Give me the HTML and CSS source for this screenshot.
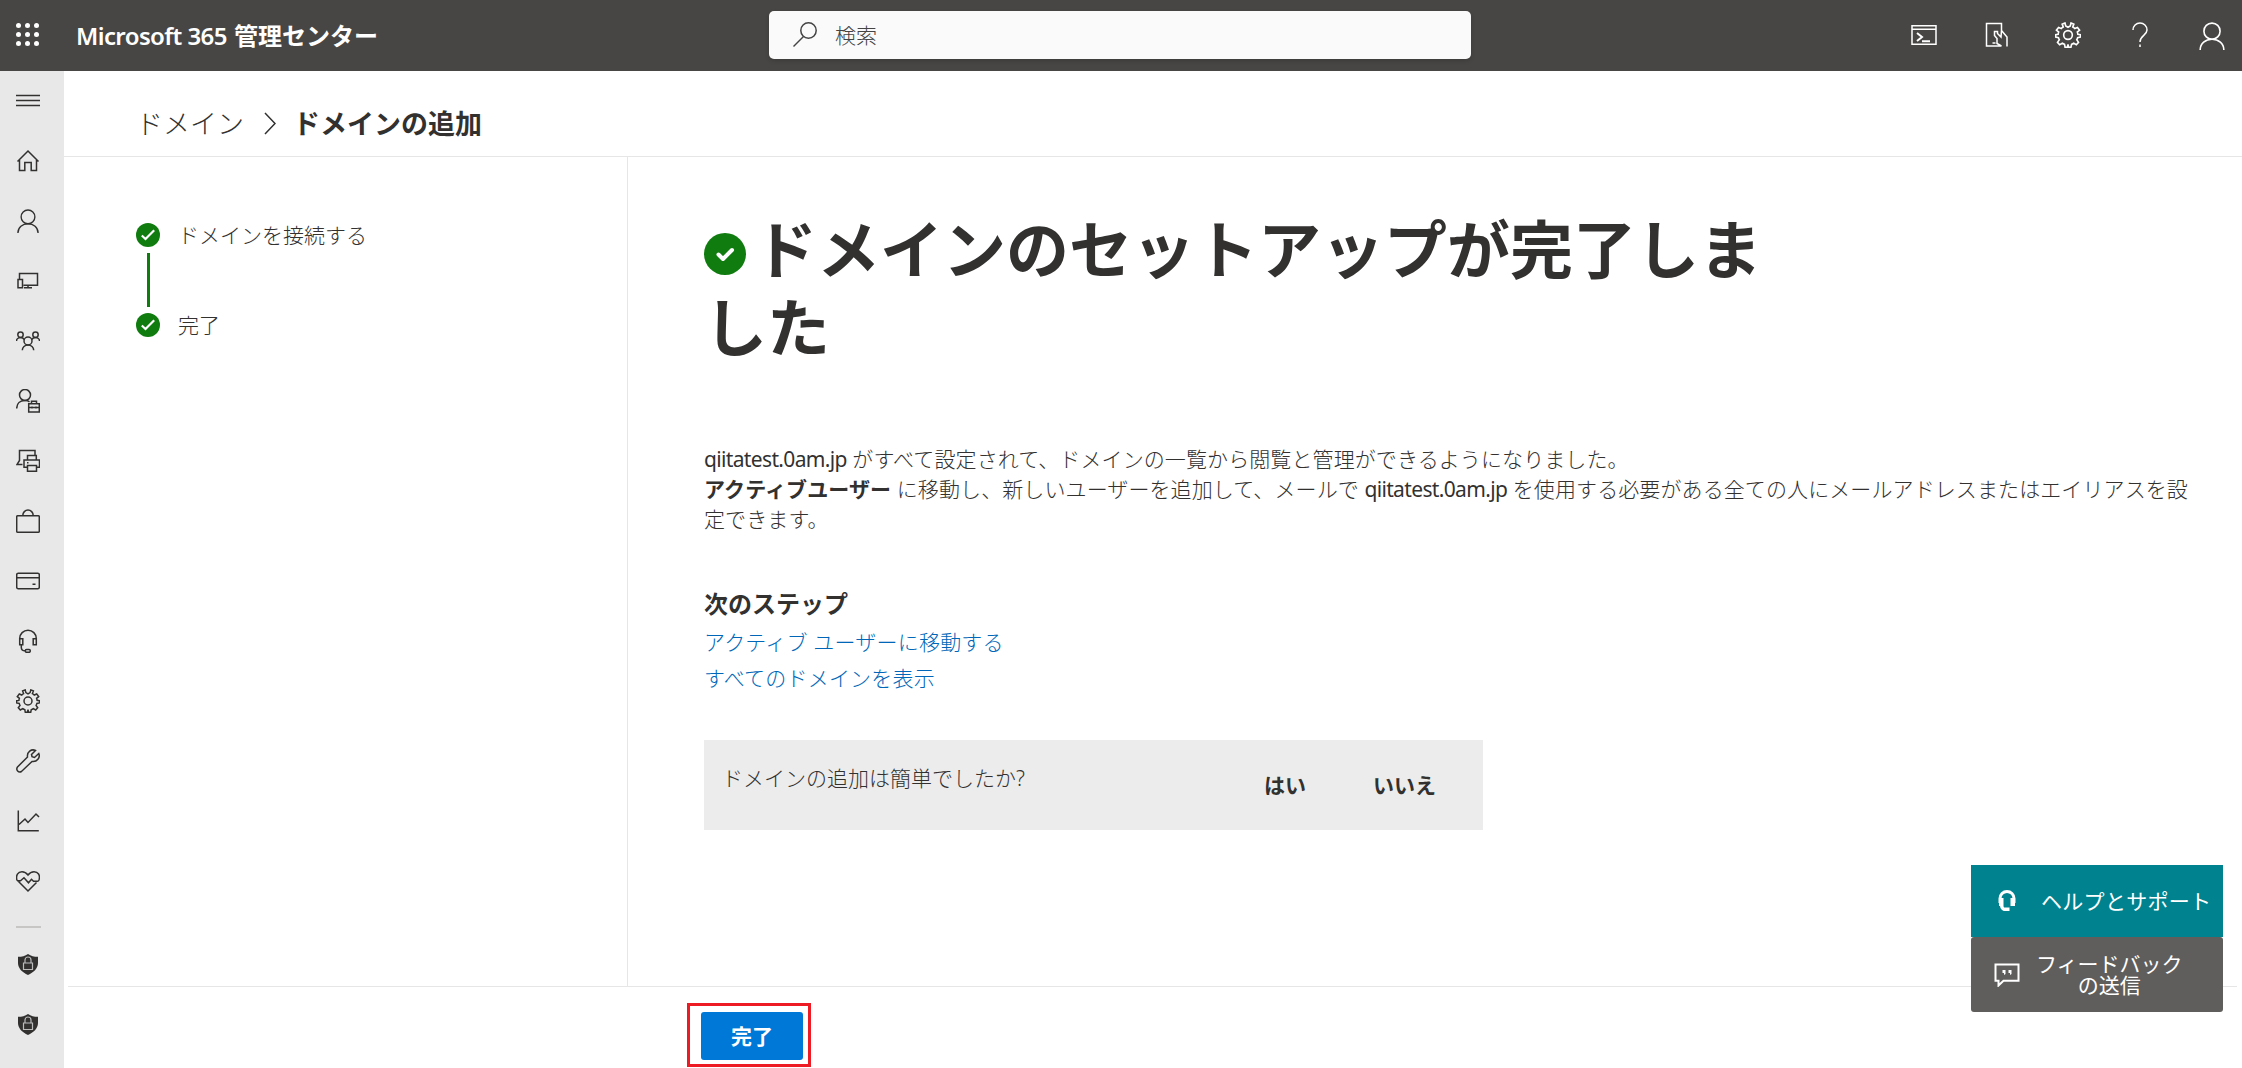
FILE: index.html
```html
<!DOCTYPE html>
<html lang="ja">
<head>
    <meta charset="UTF-8">
    <meta name="viewport" content="width=device-width, initial-scale=1.0">
    <title>Microsoft 365 管理センター</title>
    <link rel="stylesheet" href="styles.css">
</head>
<body>
    <!-- Shared icon shapes -->
    <svg class="defs" width="0" height="0">
        <symbol id="gear" viewBox="0 0 24 24">
            <path d="M9.9 3.6 9.2.9 6.6 2l1 2.600a8 8 0 0 0-1.800 1.400L3.300 5 1.300 7.600l2.100 1.700a8 8 0 0 0-.5 2.100L.6 11.700v2.200l2.600.5a8 8 0 0 0 .8 2L2.300 18.800l2 2.200 2.500-1.400a8 8 0 0 0 2 1l.5 2.700h2.100l.6-2.600 .6 2.600h2.100l.6-2.700a8 8 0 0 0 2-1l2.400 1.400 2-2.200-1.600-2.400a8 8 0 0 0 .8-2l2.600-.5v-2.200l-2.400-.4a8 8 0 0 0-.5-2l2.100-1.700L20.700 5l-2.500 1a8 8 0 0 0-1.800-1.400l1-2.600L14.800.9l-.7 2.700-2.100 1.300z"/>
            <circle cx="12" cy="12" r="4"/>
        </symbol>
        <symbol id="person" viewBox="0 0 24 26">
            <circle cx="12" cy="8.500" r="7.500"/>
            <path d="M1 26c0-6 5-10 11-10s11 4 11 10"/>
        </symbol>
        <symbol id="headset" viewBox="0 0 24 24">
            <path d="M3.700 15V9.500a8.300 8.300 0 0 1 16.600 0V15M6.800 9.700H3.700v6.100h3.100zM17.200 9.700h3.100v6.100h-3.100zM5.300 16v2.500c0 2 1.500 3.300 3.800 3.300"/>
            <rect x="9.300" y="20.500" width="5" height="2.800" rx="1.200"/>
        </symbol>
        <symbol id="shield" viewBox="0 0 24 24">
            <path class="fill-dark" d="M12 2c3 2 6 2.800 10 2.800V11c0 5.500-4.500 9.500-10 12C6.500 20.500 2 16.500 2 11V4.800C6 4.800 9 4 12 2z"/>
            <path class="lock" d="M7.500 11h9v6.500h-9zM9 11V8a3 3 0 0 1 6 0v3"/>
        </symbol>
        <symbol id="check" viewBox="0 0 24 24">
            <circle class="fill-green" cx="12" cy="12" r="12"/>
            <path class="tick" d="m5.800 12.500 3.700 3.500 8.700-8.700"/>
        </symbol>
    </svg>

    <header class="topbar">
        <button class="waffle" aria-label="アプリ起動ツール">
            <i></i><i></i><i></i><i></i><i></i><i></i><i></i><i></i><i></i>
        </button>
        <div class="brand"><span class="brand-latin">Microsoft 365 </span>管理センター</div>
        <div class="search">
            <svg class="icon" width="24" height="26" viewBox="0 0 24 26"><circle cx="15.500" cy="8.500" r="7.700"/><path d="M10.500 14.500 0.500 24.500"/></svg>
            <span>検索</span>
        </div>
        <div class="top-icons">
            <svg class="icon" width="26" height="24" viewBox="0 0 26 24"><path d="M1 2.700h24v18.600H1zM1 6.200h24"/><path class="bold" d="m6 10 5 4-5 4M11 18.300h8"/></svg>
            <svg class="icon" width="26" height="26" viewBox="0 0 26 26"><path d="M8 24H3.500V1.500h15V9M18.500 24H8M9.500 21h3M18.500 8.500 18 15l-3.500-3.500V9.500h-3v4l2.500 3v5L18.500 24M18.500 8.500l5.500 6.500v9.500"/></svg>
            <svg class="icon" width="26" height="26"><use href="#gear"/></svg>
            <svg class="icon" width="26" height="26" viewBox="0 0 26 26"><path d="M6 8a7 7 0 0 1 14 0c0 5.500-7 5.500-7 12M13 22.500V25"/></svg>
            <svg class="icon person" width="26" height="28"><use href="#person"/></svg>
        </div>
    </header>

    <div class="layout">
        <nav class="sidebar">
            <div class="nav-item"><svg class="icon" width="24" height="24" viewBox="0 0 24 24"><path d="M0 6.500h24M0 11.500h24M0 16.500h24"/></svg></div>
            <div class="nav-item"><svg class="icon" width="24" height="24" viewBox="0 0 24 24"><path d="M1.500 12.500 12 2l10.500 10.500M3.500 10.800V21.500h5.300v-8h6.400v8h5.300V10.800"/></svg></div>
            <div class="nav-item"><svg class="icon" width="22" height="24"><use href="#person"/></svg></div>
            <div class="nav-item"><svg class="icon" width="24" height="24" viewBox="0 0 24 24"><path d="M3.500 10V4.500h18v11.700h-14M2 10.500h4.500v8.300H2zM8 18.800h8M12 16v3"/></svg></div>
            <div class="nav-item"><svg class="icon" width="24" height="24" viewBox="0 0 24 24"><circle cx="4.500" cy="5.800" r="2.700"/><circle cx="19.500" cy="5.800" r="2.700"/><circle cx="12" cy="12" r="4"/><path d="M.5 12c0-2 2-3.500 4-3.500s3 .8 3.700 2M23.500 12c0-2-2-3.500-4-3.500s-3 .8-3.700 2M6.300 21.300c0-3 2.500-5.300 5.700-5.300s5.700 2.300 5.700 5.300"/></svg></div>
            <div class="nav-item"><svg class="icon" width="24" height="24" viewBox="0 0 24 24"><circle cx="9" cy="6" r="5.500"/><path d="M.7 19.500c0-5 3.500-8 8.300-8 2 0 3.500.5 4.500 1.300M12.700 14.800h10.600v8.200H12.700zM15.500 14.800v-2.500h5v2.500M12.700 18.500h10.600M16 17.500v2M20 17.500v2"/></svg></div>
            <div class="nav-item"><svg class="icon" width="24" height="24" viewBox="0 0 24 24"><path d="M6.500 15.500H1L3.500 11.500v-10h15.500v4.500M11.500 11V6.500h8.800V11M11 18.300H8V11h15.500v7.300h-3M11.500 16.500h9v5.700h-9zM11 13.800h1.500"/></svg></div>
            <div class="nav-item"><svg class="icon" width="24" height="24" viewBox="0 0 24 24"><rect x=".7" y="6.700" width="22.600" height="16.500" rx="1"/><path d="M6.800 6.500a5.200 5.500 0 0 1 10.400 0"/></svg></div>
            <div class="nav-item"><svg class="icon" width="24" height="24" viewBox="0 0 24 24"><rect x=".7" y="4.200" width="22.600" height="15.500" rx="1.500"/><path d="M1 8.700h22M16.500 15.200h3"/></svg></div>
            <div class="nav-item"><svg class="icon" width="24" height="24"><use href="#headset"/></svg></div>
            <div class="nav-item"><svg class="icon" width="24" height="24"><use href="#gear"/></svg></div>
            <div class="nav-item"><svg class="icon" width="24" height="24" viewBox="0 0 24 24"><path d="M19.500 1.500c-4-2-8.800 1.500-8 6.500L1.500 18c-2 3 1 6 4 4.500L16 12.500c5 .8 8.500-4 6.800-8L18.500 8.500l-2.500-.8-.5-2.200z"/></svg></div>
            <div class="nav-item"><svg class="icon" width="24" height="24" viewBox="0 0 24 24"><path d="M2.300 1.500v20.200h20.500M3 15.500l6-5.500 3 3.500 8-8.500 3 3"/></svg></div>
            <div class="nav-item"><svg class="icon" width="24" height="24" viewBox="0 0 24 24"><path d="M1 11.500C-.5 6 2 2.700 6 2.700c3 0 4.500 1.300 6 3.300 1.500-2 3-3.300 6-3.300 4 0 6.500 3.300 5 8.300-.3.700-.8 1.300-1.500 1.300h-4l-2-2-3 3.500-4.500-5-3.500 3H1M2.500 12.500 12 22l8.500-8.500"/></svg></div>
            <div class="divider"></div>
            <div class="nav-item"><svg class="icon" width="24" height="24"><use href="#shield"/></svg></div>
            <div class="nav-item"><svg class="icon" width="24" height="24"><use href="#shield"/></svg></div>
        </nav>

        <main class="main">
            <div class="breadcrumb">
                <span>ドメイン</span>
                <svg class="icon" width="12" height="24" viewBox="0 0 12 24"><path d="m1 1 10 10.500L1 22"/></svg>
                <strong>ドメインの追加</strong>
            </div>

            <div class="wizard">
                <div class="steps">
                    <div class="step"><svg width="24" height="24"><use href="#check"/></svg>ドメインを接続する</div>
                    <div class="step-line"></div>
                    <div class="step"><svg width="24" height="24"><use href="#check"/></svg>完了</div>
                </div>

                <div class="content">
                    <h1><svg class="done-icon" width="42" height="42" viewBox="0 0 42 42"><circle class="fill-green" cx="21" cy="21" r="21"/><path class="tick" d="m14.500 21.500 4.500 4.500 9-9"/></svg>ドメインのセットアップが完了しま<br>した</h1>
                    <p class="message"><span class="domain">qiitatest.0am.jp</span> がすべて設定されて、ドメインの一覧から閲覧と管理ができるようになりました。<br><b>アクティブユーザー</b> に移動し、新しいユーザーを追加して、メールで <span class="domain">qiitatest.0am.jp</span> を使用する必要がある全ての人にメールアドレスまたはエイリアスを設<br>定できます。</p>
                    <h2>次のステップ</h2>
                    <a href="#">アクティブ ユーザーに移動する</a>
                    <a href="#">すべてのドメインを表示</a>
                    <div class="survey">
                        <span class="question">ドメインの追加は簡単でしたか?</span>
                        <button>はい</button>
                        <button>いいえ</button>
                    </div>
                </div>
            </div>

            <footer class="footer">
                <div class="highlight"><button class="primary">完了</button></div>
            </footer>
        </main>
    </div>

    <div class="floating">
        <button class="help">
            <svg class="icon" width="18" height="24" viewBox="0 0 18 24"><path class="thick" d="M2 14V9.500a7 7 0 0 1 14 0V14"/><path class="fill-white" d="M1 9h4.500v8H1zM12.500 9H17v8h-4.500zM2 16h3l1 2.500h5.500V22H7c-3 0-5-2.500-5-6z"/></svg>
            <span>ヘルプとサポート</span>
        </button>
        <button class="feedback">
            <svg class="icon" width="26" height="24" viewBox="0 0 26 24"><path class="bold" d="M1.500 1.500h23v16.300H9.500l-5 4.700v-4.700h-3z"/><path class="fill-white" d="M8.500 7h3v4l-1.500 1v-2H8.500zM14.500 7h3v4l-1.500 1v-2h-1.500z"/></svg>
            <span>フィードバック<br>の送信</span>
        </button>
    </div>
</body>
</html>
```
FILE: styles.css
```css
* {
    box-sizing: border-box;
}

body {
    margin: 0;
    height: 1068px;
    overflow: hidden;
    display: flex;
    flex-direction: column;
    background-color: #fff;
    color: #323130;
    font-family: "Noto Sans", "Noto Sans CJK JP", sans-serif;
    font-size: 21px;
    font-weight: 300;
    line-height: 30px;
}

button {
    font: inherit;
    color: inherit;
    background: none;
    border: none;
    padding: 0;
}

b,
strong {
    font-weight: 700;
}

/* icons */
.defs {
    position: absolute;
}

.icon {
    display: block;
    flex: none;
    fill: none;
    stroke: currentColor;
    stroke-width: 1.500;
}

.bold {
    stroke-width: 2;
}

.thick {
    stroke-width: 3;
}

.fill-dark {
    fill: #323130;
    stroke: none;
}

.fill-green {
    fill: #107c10;
    stroke: none;
}

.fill-white {
    fill: #fff;
    stroke: none;
}

.lock {
    fill: none;
    stroke: #bbb;
    stroke-width: 1.200;
}

.tick {
    fill: none;
    stroke: #fff;
    stroke-width: 2.200;
}

/* top bar */
.topbar {
    flex: none;
    display: flex;
    align-items: center;
    height: 71px;
    padding: 0 17px 0 16px;
    background-color: #484644;
    color: #fff;
}

.waffle {
    display: grid;
    grid-template-columns: repeat(3, 5px);
    gap: 4px;
    width: 60px;
    margin-bottom: 2px;
}

.waffle i {
    width: 5px;
    height: 5px;
    border-radius: 50%;
    background-color: #fff;
}

.brand {
    width: 693px;
    font-size: 24px;
    font-weight: 600;
    white-space: pre;
}

.brand-latin {
    display: inline-block;
    width: 158px;
    letter-spacing: -0.600px;
}

.search {
    display: flex;
    align-items: center;
    gap: 18px;
    width: 702px;
    height: 48px;
    margin-bottom: 1px;
    padding-left: 24px;
    border-radius: 5px;
    background-color: #fafafa;
    color: #444;
    box-shadow: 0 2px 4px rgba(0, 0, 0, 0.15);
}

.top-icons {
    display: flex;
    align-items: center;
    gap: 46px;
    margin-left: auto;
    margin-bottom: 2px;
}

.top-icons .person {
    margin-top: 2px;
}

/* left navigation */
.layout {
    flex: 1;
    display: flex;
    min-height: 0;
}

.sidebar {
    flex: none;
    width: 64px;
    background-color: #e8e8e8;
}

.nav-item {
    display: flex;
    align-items: center;
    justify-content: center;
    width: 56px;
    height: 60px;
}

.divider {
    width: 25px;
    height: 2px;
    margin: 15px 0 6px 16px;
    background-color: #c8c6c4;
}

/* page */
.main {
    flex: 1;
    display: flex;
    flex-direction: column;
}

.breadcrumb {
    display: flex;
    align-items: center;
    height: 86px;
    padding: 20px 0 0 72px;
    border-bottom: 1px solid #e6e6e6;
    font-size: 27px;
}

.breadcrumb .icon {
    margin: 0 17px 0 20px;
}

.wizard {
    flex: 1;
    display: flex;
}

.steps {
    width: 564px;
    padding: 63px 0 0 72px;
    border-right: 1px solid #e6e6e6;
}

.step {
    display: flex;
    align-items: center;
    gap: 18px;
    height: 30px;
}

.step-line {
    width: 3px;
    height: 54px;
    margin: 3px 0 3px 11px;
    background-color: #107c10;
}

.content {
    flex: 1;
    padding: 53px 0 0 76px;
}

h1 {
    margin: 0;
    font-size: 63px;
    font-weight: 700;
    line-height: 78px;
}

.done-icon {
    margin-right: 8px;
    vertical-align: -2px;
}

.done-icon .tick {
    stroke-width: 4;
    stroke-linecap: round;
    stroke-linejoin: round;
}

.message {
    margin: 78px 0 0;
    letter-spacing: 0.100px;
}

.domain {
    display: inline-block;
    font-weight: 400;
    letter-spacing: -0.650px;
}

h2 {
    margin: 54px 0 4px;
    font-size: 24px;
    line-height: 32px;
}

.content a {
    display: block;
    line-height: 36px;
    letter-spacing: 0.200px;
    color: #0067b8;
    text-decoration: none;
}

.survey {
    display: flex;
    width: 779px;
    height: 90px;
    margin-top: 44px;
    padding: 23px 47px 0 18px;
    background-color: #ececec;
}

.question {
    flex: 1;
}

.survey button {
    height: 44px;
    margin-left: 67px;
    font-weight: 700;
}

.footer {
    height: 82px;
    margin: 0 5px 0 4px;
    padding: 16px 0 0 619px;
    border-top: 1px solid #e6e6e6;
}

.highlight {
    width: 124px;
    height: 64px;
    padding: 6px 11px;
    border: 3px solid #ed1c24;
}

.primary {
    width: 102px;
    height: 48px;
    border-radius: 3px;
    background-color: #0078d7;
    color: #fff;
    font-weight: 700;
}

/* floating help buttons */
.floating {
    position: absolute;
    left: 1971px;
    top: 865px;
    width: 252px;
    color: #fff;
    font-weight: 400;
}

.help,
.feedback {
    display: flex;
    align-items: center;
    width: 100%;
}

.help {
    height: 72px;
    padding-left: 27px;
    background-color: #00838f;
    letter-spacing: 0.300px;
}

.help span {
    margin-left: 25px;
}

.feedback {
    height: 75px;
    padding-left: 23px;
    border-radius: 3px;
    background-color: #605e5c;
    line-height: 21px;
}

.feedback span {
    margin-left: 16px;
}
```
